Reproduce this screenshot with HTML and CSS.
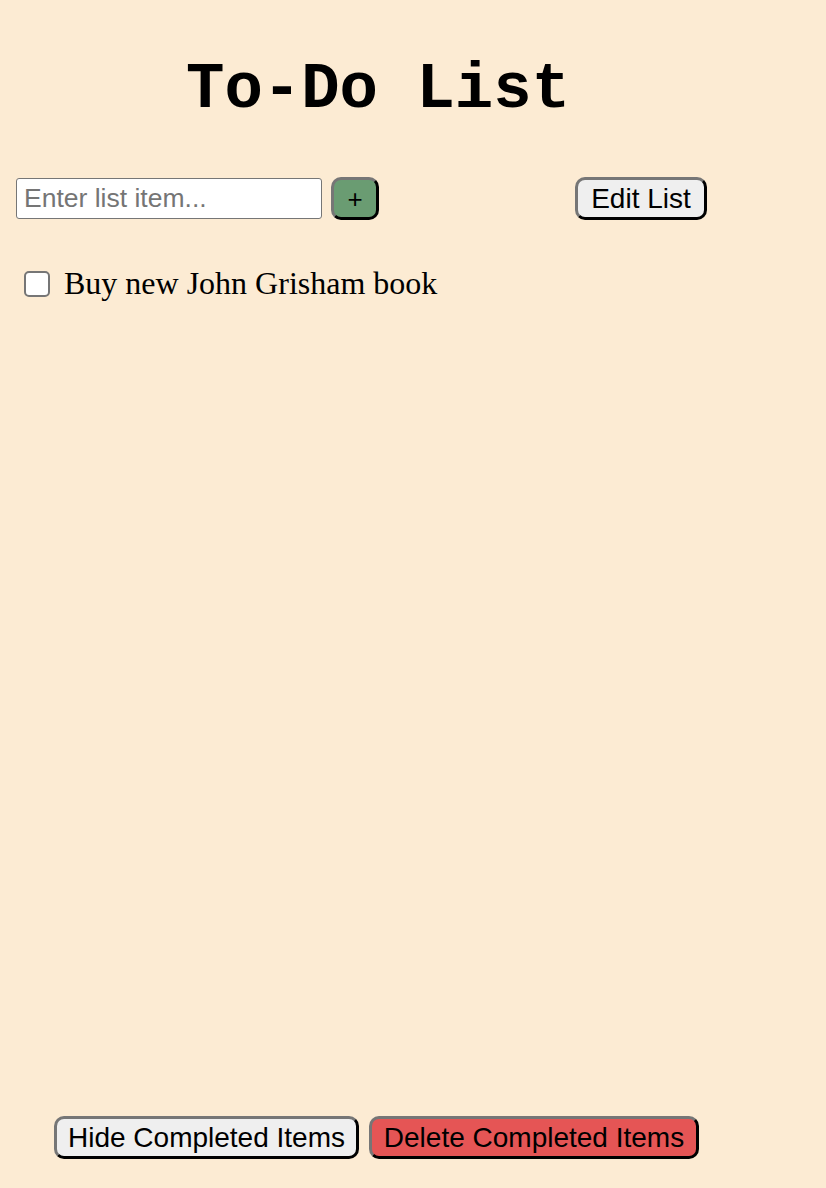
FILE: index.html
```html
<!DOCTYPE html>
<html lang="en">
<head>
<meta charset="utf-8">
<title>To-Do List</title>
<link rel="stylesheet" href="styles.css">
</head>
<body>
<div class="app">
  <h1 class="title">To-Do List</h1>
  <div class="controls">
    <div class="add-group">
      <input class="item-input" type="text" placeholder="Enter list item...">
      <button class="btn btn-add">+</button>
    </div>
    <button class="btn btn-edit">Edit List</button>
  </div>
  <ul class="list">
    <li class="list-item">
      <input class="check" type="checkbox">
      <span class="item-text">Buy new John Grisham book</span>
    </li>
  </ul>
  <div class="footer">
    <button class="btn btn-hide">Hide Completed Items</button>
    <button class="btn btn-delete">Delete Completed Items</button>
  </div>
</div>
</body>
</html>
```

FILE: styles.css
```css
html, body {
  margin: 0;
  padding: 0;
}
body {
  background: #fcebd3;
  font-family: "Liberation Serif", "Times New Roman", serif;
  height: 1188px;
}
.app {
  width: 740px;
  margin-left: 8px;
  padding: 0 8px;
  box-sizing: border-box;
  height: 100%;
  display: flex;
  flex-direction: column;
}
.title {
  margin: 54px 0 0 0;
  font-family: "Liberation Mono", "Courier New", monospace;
  font-size: 64px;
  font-weight: bold;
  text-align: center;
  line-height: 72px;
}
.controls {
  margin-top: 51px;
  display: flex;
  align-items: center;
  justify-content: space-between;
  padding-right: 33px;
}
.add-group {
  display: flex;
  align-items: center;
  gap: 9px;
}
.item-input {
  width: 306px;
  height: 41px;
  box-sizing: border-box;
  border: 1px solid #767676;
  border-radius: 3px;
  font-family: "Liberation Sans", Arial, sans-serif;
  font-size: 26.5px;
  padding: 0 7px;
  background: #fff;
}
.item-input::placeholder {
  color: #757575;
}
.btn {
  font-family: "Liberation Sans", Arial, sans-serif;
  font-size: 28px;
  color: #000;
  height: 43px;
  box-sizing: border-box;
  border: 3px outset #767676;
  border-color: #767676 #222 #222 #767676;
  border-radius: 10px;
  background: #efefef;
  padding: 0;
  line-height: 1;
  white-space: nowrap;
}
.btn-add {
  width: 48px;
  background: #6a9c72;
  font-size: 26px;
}
.btn-edit {
  width: 132px;
}
.list {
  list-style: none;
  margin: 45px 0 0 0;
  padding: 0 0 0 8px;
}
.list-item {
  display: flex;
  align-items: center;
  gap: 14px;
}
.check {
  appearance: none;
  -webkit-appearance: none;
  width: 26px;
  height: 26px;
  margin: 0;
  box-sizing: border-box;
  border: 2px solid #767676;
  border-radius: 5px;
  background: #fff;
}
.item-text {
  font-size: 32px;
}
.footer {
  margin-top: auto;
  margin-bottom: 29px;
  display: flex;
  justify-content: center;
  gap: 10px;
  padding-right: 3px;
}
.btn-hide {
  width: 305px;
}
.btn-delete {
  width: 330px;
  background: #e55555;
}
```
